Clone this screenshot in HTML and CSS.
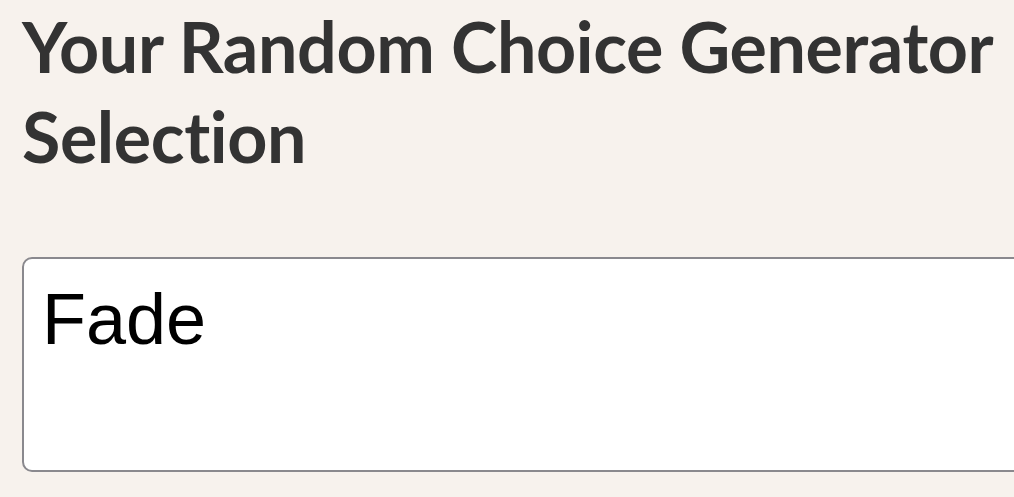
FILE: index.html
```html
<!DOCTYPE html>
<html>
<head>
<meta charset="utf-8">
<link rel="stylesheet" href="styles.css">
</head>
<body>
<main class="page">
  <h1 class="title">Your Random Choice Generator Selection</h1>
  <div class="result">Fade</div>
</main>
</body>
</html>
```
FILE: styles.css
```css
html, body {
  margin: 0;
  padding: 0;
  background: #f7f2ed;
  overflow: hidden;
}
.page {
  padding: 0 0 0 22px;
  width: 1100px;
}
.title {
  margin: 0;
  padding-top: 1px;
  width: 985px;
  font-family: Lato, "Open Sans", sans-serif;
  font-weight: 700;
  font-size: 70px;
  line-height: 90px;
  letter-spacing: -0.4px;
  font-variant-ligatures: none;
  color: #333333;
}
.result {
  margin-top: 76px;
  height: 215px;
  box-sizing: border-box;
  border: 2px solid #8a898e;
  border-radius: 10px;
  background: #ffffff;
  padding: 20px 0 0 18px;
  font-family: "Liberation Sans", Arial, sans-serif;
  font-size: 72px;
  line-height: 80px;
  color: #000000;
}
```
